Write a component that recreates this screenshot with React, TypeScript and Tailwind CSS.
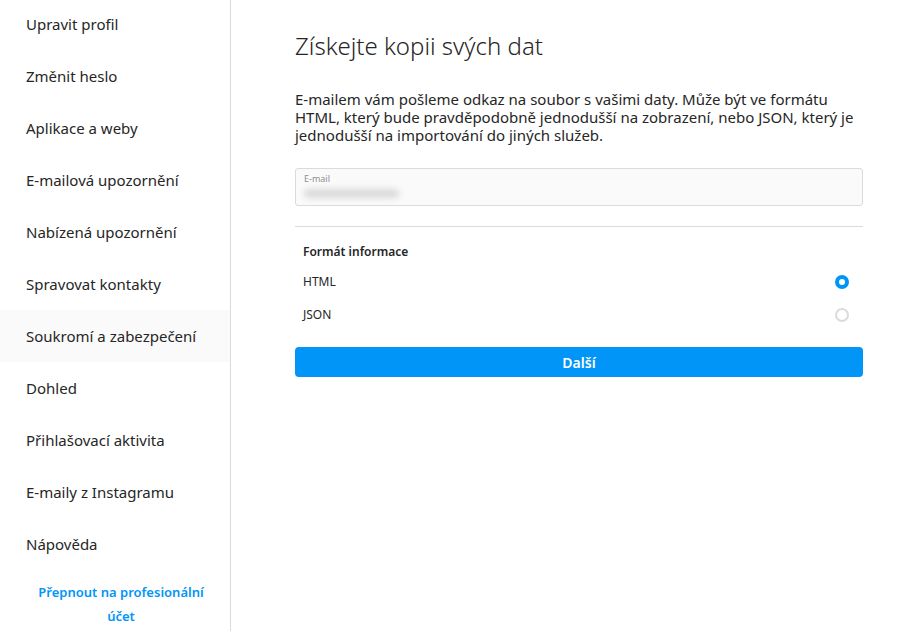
import React from "react";

const items = [
  "Upravit profil",
  "Změnit heslo",
  "Aplikace a weby",
  "E-mailová upozornění",
  "Nabízená upozornění",
  "Spravovat kontakty",
  "Soukromí a zabezpečení",
  "Dohled",
  "Přihlašovací aktivita",
  "E-maily z Instagramu",
  "Nápověda",
];

export default function App() {
  return (
    <div
      className="flex w-[920px] h-[631px] bg-white text-[#262626] overflow-hidden"
      style={{ fontFamily: '"Noto Sans", "Open Sans", Arial, sans-serif' }}
    >
      <aside className="w-[231px] shrink-0 border-r border-[#dbdbdb] flex flex-col">
        <ul className="flex flex-col -mt-[2px]">
          {items.map((t) => (
            <li
              key={t}
              className={`h-[52px] flex items-center pl-[26px] text-[15px] ${
                t === "Soukromí a zabezpečení" ? "bg-[#fafafa]" : ""
              }`}
            >
              {t}
            </li>
          ))}
        </ul>
        <div className="mt-[10px] pl-[36px] pr-[24px] text-center text-[13px] leading-[24px] font-semibold text-[#0095f6]">
          Přepnout na profesionální účet
        </div>
      </aside>
      <main className="flex-1 pl-[64px] pr-[57px] pt-[29px]">
        <h1 className="text-[24px] font-light leading-[34px]">Získejte kopii svých dat</h1>
        <p className="mt-[27px] text-[15px] leading-[18px]">
          E-mailem vám pošleme odkaz na soubor s vašimi daty. Může být ve formátu HTML, který bude pravděpodobně
          jednodušší na zobrazení, nebo JSON, který je jednodušší na importování do jiných služeb.
        </p>
        <div className="mt-[24px] h-[38px] border border-[#dbdbdb] rounded-[3px] bg-[#fafafa] px-[8px] pt-[4px]">
          <div className="text-[9px] leading-[12px] text-[#8e8e8e]">E-mail</div>
          <div className="mt-[4px] h-[9px] w-[95px] rounded-full bg-[#d9d9d9] blur-[3px]" />
        </div>
        <div className="mt-[20px] border-t border-[#dbdbdb]" />
        <div className="px-[8px] pt-[17px]">
          <div className="text-[12px] font-semibold leading-[16px]">Formát informace</div>
          <div className="mt-[6px] h-[32px] flex items-center justify-between text-[12px]">
            <span>HTML</span>
            <span className="w-[14px] h-[14px] rounded-full border-[4px] border-[#0095f6] bg-white mr-[6px]" />
          </div>
          <div className="h-[34px] flex items-center justify-between text-[12px]">
            <span>JSON</span>
            <span className="w-[14px] h-[14px] rounded-full border-[2px] border-[#dbdbdb] bg-white mr-[6px]" />
          </div>
        </div>
        <button className="mt-[15px] w-full h-[30px] rounded-[4px] bg-[#0095f6] text-white text-[14px] font-semibold">
          Další
        </button>
      </main>
    </div>
  );
}
